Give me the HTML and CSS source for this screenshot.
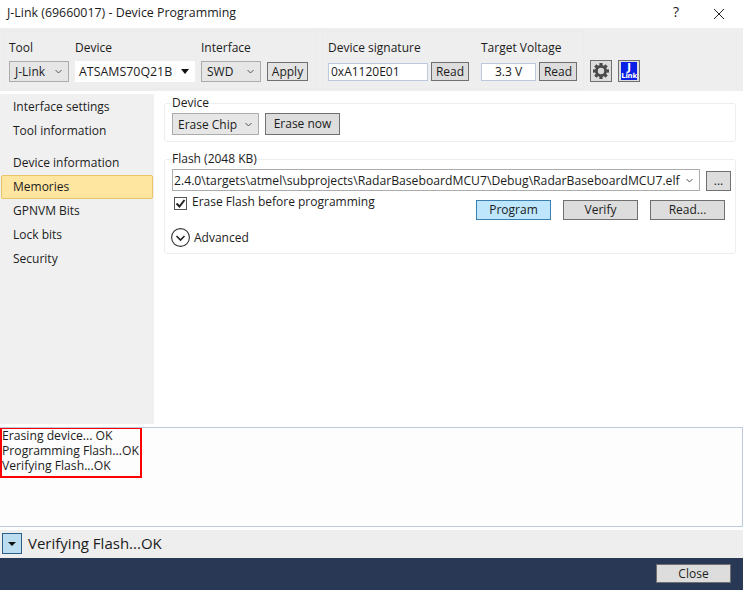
FILE: index.html
```html
<!DOCTYPE html>
<html lang="en">
<head>
<meta charset="utf-8">
<title>J-Link Device Programming</title>
<link rel="stylesheet" href="styles.css">
</head>
<body>
<div class="window">
  <header class="titlebar">
    <span class="title">J-Link (69660017) - Device Programming</span>
    <span class="help">?</span>
    <svg class="close-x" width="12" height="12" viewBox="0 0 12 12"><path d="M1 1L11 11M11 1L1 11" stroke="#222" stroke-width="1" fill="none"/></svg>
  </header>

  <section class="toolbar">
    <div class="panel panel-a">
      <div class="field f-tool">
        <label>Tool</label>
        <div class="combo gray w60"><span>J-Link</span><svg class="chev" width="7" height="5" viewBox="0 0 7 5"><path d="M.5 1L3.5 4L6.5 1" stroke="#555" fill="none"/></svg></div>
      </div>
      <div class="field f-device">
        <label>Device</label>
        <div class="combo white w120"><span class="device-name">ATSAMS70Q21B</span><svg class="arrow" width="8" height="5" viewBox="0 0 8 5"><path d="M0 0H8L4 5Z" fill="#111"/></svg></div>
      </div>
      <div class="field f-iface">
        <label>Interface</label>
        <div class="combo gray w60"><span>SWD</span><svg class="chev" width="7" height="5" viewBox="0 0 7 5"><path d="M.5 1L3.5 4L6.5 1" stroke="#555" fill="none"/></svg></div>
      </div>
      <button class="btn apply">Apply</button>
    </div>
    <div class="panel panel-b">
      <div class="field f-sig">
        <label>Device signature</label>
        <div class="input-row"><div class="input w100">0xA1120E01</div><button class="btn read">Read</button></div>
      </div>
      <div class="field f-volt">
        <label>Target Voltage</label>
        <div class="input-row"><div class="input w55 center">3.3 V</div><button class="btn read">Read</button></div>
      </div>
    </div>
    <button class="icon-btn gear-btn" aria-label="Settings">
      <svg width="18" height="18" viewBox="0 0 18 18"><g fill="#4a4a4a"><circle cx="9" cy="9" r="6"/><rect x="7.4" y="1" width="3.2" height="3.2"/><rect x="7.4" y="13.8" width="3.2" height="3.2"/><rect x="1" y="7.4" width="3.2" height="3.2"/><rect x="13.8" y="7.4" width="3.2" height="3.2"/><g transform="rotate(45 9 9)"><rect x="7.4" y="1" width="3.2" height="3.2"/><rect x="7.4" y="13.8" width="3.2" height="3.2"/><rect x="1" y="7.4" width="3.2" height="3.2"/><rect x="13.8" y="7.4" width="3.2" height="3.2"/></g></g><circle cx="9" cy="9" r="3.2" fill="#d8d8d8"/></svg>
    </button>
    <button class="icon-btn jlink-btn" aria-label="J-Link"><span class="jl-j">J</span><span class="jl-link">Link</span></button>
  </section>

  <main class="main">
    <nav class="sidebar">
      <div class="nav-item">Interface settings</div>
      <div class="nav-item">Tool information</div>
      <div class="nav-gap"></div>
      <div class="nav-item">Device information</div>
      <div class="nav-item active">Memories</div>
      <div class="nav-item">GPNVM Bits</div>
      <div class="nav-item">Lock bits</div>
      <div class="nav-item">Security</div>
    </nav>
    <div class="content">
      <fieldset class="group group-device">
        <legend>Device</legend>
        <div class="row">
          <div class="combo gray erase-combo"><span>Erase Chip</span><svg class="chev" width="7" height="5" viewBox="0 0 7 5"><path d="M.5 1L3.5 4L6.5 1" stroke="#555" fill="none"/></svg></div>
          <button class="btn erase-now">Erase now</button>
        </div>
      </fieldset>
      <fieldset class="group group-flash">
        <legend>Flash (2048 KB)</legend>
        <div class="row path-row">
          <div class="combo white path"><span class="path-text">2.4.0\targets\atmel\subprojects\RadarBaseboardMCU7\Debug\RadarBaseboardMCU7.elf</span><svg class="chev" width="7" height="5" viewBox="0 0 7 5"><path d="M.5 1L3.5 4L6.5 1" stroke="#555" fill="none"/></svg></div>
          <button class="btn browse">...</button>
        </div>
        <div class="row action-row">
          <div class="check-wrap">
            <svg class="check" width="13" height="13" viewBox="0 0 13 13"><rect x=".5" y=".5" width="12" height="12" fill="#fff" stroke="#555"/><path d="M2.5 6.5L5.5 9.5L10.5 3" stroke="#222" stroke-width="2" fill="none"/></svg>
            <span class="check-label">Erase Flash before programming</span>
          </div>
          <div class="actions">
            <button class="btn act primary">Program</button>
            <button class="btn act">Verify</button>
            <button class="btn act">Read...</button>
          </div>
        </div>
        <div class="advanced">
          <svg width="19" height="19" viewBox="0 0 19 19"><circle cx="9.5" cy="9.5" r="8.9" fill="#fff" stroke="#333" stroke-width="1.1"/><path d="M5.5 8L9.5 12L13.5 8" stroke="#222" stroke-width="1.6" fill="none"/></svg>
          <span>Advanced</span>
        </div>
      </fieldset>
    </div>
  </main>

  <section class="log">
    <div class="log-box">
      <div class="log-lines">
        <div>Erasing device... OK</div>
        <div>Programming Flash...OK</div>
        <div>Verifying Flash...OK</div>
      </div>
    </div>
  </section>

  <section class="status">
    <button class="status-btn" aria-label="Toggle log"><svg width="8" height="4" viewBox="0 0 8 4"><path d="M0 0H8L4 4Z" fill="#111"/></svg></button>
    <span class="status-text">Verifying Flash...OK</span>
  </section>

  <footer class="footer">
    <button class="btn close">Close</button>
  </footer>
</div>
</body>
</html>
```

FILE: styles.css
```css
* { box-sizing: border-box; }
html, body { margin: 0; padding: 0; }
body {
  width: 743px;
  height: 590px;
  overflow: hidden;
  background: #fff;
  font-family: "Open Sans", "Noto Sans", sans-serif;
  font-size: 12px;
  color: #1c1c1c;
}
.window { display: flex; flex-direction: column; height: 590px; }

.titlebar { height: 28px; display: flex; align-items: center; padding: 0 0 3px 7px; }
.title { flex: 1; font-size: 12.4px; }
.help { width: 12px; margin-right: 28px; font-size: 14px; line-height: 14px; margin-top: -1px; }
.close-x { margin-right: 18px; margin-top: 2px; }

.toolbar {
  height: 63px;
  background: #eeeeee;
  display: flex;
  align-items: flex-start;
  padding: 3px 0 0 3px;
}
.panel { height: 58px; border: 1px solid #ebebeb; display: flex; padding: 9px 0 0 5px; }
.panel-a { width: 314px; }
.panel-b { width: 262px; margin-left: 5px; }
.field { display: flex; flex-direction: column; }
.field label { height: 20px; line-height: 14px; }
.f-tool { width: 66px; }
.f-device { width: 126px; }
.f-iface { width: 66px; }
.f-sig { width: 153px; }

.combo {
  display: flex;
  align-items: center;
  justify-content: space-between;
  height: 21px;
  padding: 0 6px 0 5px;
  overflow: hidden;
  white-space: nowrap;
}
.combo.gray { background: #e6e6e6; border: 1px solid #acacac; }
.combo.white { background: #fff; }
.w60 { width: 60px; }
.w120 { width: 120px; padding-left: 4px; }
.device-name { font-size: 12.4px; }
.btn {
  font: inherit;
  color: inherit;
  padding: 0;
  background: #dddddd;
  border: 1px solid #707070;
  border-radius: 0;
  line-height: 1;
}
.apply { width: 41px; height: 19px; margin-top: 21px; background: #e3e3e3; }
.input-row { display: flex; align-items: center; height: 21px; }
.input { height: 18px; background: #fff; border: 1px solid #bcc9dc; line-height: 16px; padding-left: 2px; }
.w100 { width: 100px; }
.w55 { width: 55px; }
.center { text-align: center; padding-left: 0; }
.read { width: 38px; height: 19px; margin-left: 3px; }

.icon-btn { width: 22px; height: 22px; padding: 0; background: #dddddd; border: 1px solid #707070; display: flex; align-items: center; justify-content: center; margin-top: 29px; }
.gear-btn { margin-left: 6px; }
.jlink-btn { margin-left: 6px; flex-direction: column; color: #fff; font-family: "DejaVu Sans", sans-serif; font-weight: bold; background: linear-gradient(#0a1ee6, #0a1ee6) center / 16px 18px no-repeat #dddddd; }
.jl-j { font-size: 10px; line-height: 10px; }
.jl-link { font-size: 7px; line-height: 7px; letter-spacing: -0.2px; }

.main { height: 336px; display: flex; padding-top: 3px; }
.sidebar { width: 154px; height: 330px; background: #f0f0f0; padding: 1px 0 0 1px; }
.nav-item { height: 24px; line-height: 24px; padding-left: 12px; }
.nav-gap { height: 8px; }
.nav-item.active { background: #fee6a1; border: 1px solid #ecc468; border-radius: 2px; width: 152px; line-height: 22px; padding-left: 11px; }
.content { flex: 1; padding: 2px 7px 0 10px; }

.group { margin: 0; border: 1px solid #eeeeee; border-radius: 3px; padding: 0 0 0 7px; min-width: 0; }
.group legend { padding: 0; margin-left: 0; line-height: 14px; }
.group-device { height: 46px; }
.group-flash { height: 102px; margin-top: 10px; }
.row { display: flex; }
.erase-combo { width: 87px; height: 22px; margin-top: 3px; }
.erase-now { width: 75px; height: 22px; margin: 3px 0 0 6px; }
.path-row { margin-top: 3px; }
.path { width: 528px; border: 1px solid #acacac; height: 22px; padding: 0 6px 0 1px; }
.path-text { flex: 1; overflow: visible; font-size: 12.2px; }
.browse { width: 25px; height: 20px; margin: 2px 0 0 6px; }
.action-row { justify-content: space-between; height: 37px; padding-right: 10px; }
.check-wrap { display: flex; align-items: flex-start; gap: 5px; padding: 6px 0 0 2px; line-height: 14px; }
.check { flex: none; }
.check-label { margin-top: -2px; }
.actions { display: flex; gap: 12px; padding-top: 9px; }
.act { width: 75px; height: 20px; }
.primary { background: #bee6fd; border-color: #3c7fb1; }
.advanced { display: flex; align-items: center; gap: 4px; margin-left: -1px; }

.log { height: 100px; border-top: 1px solid #bcc9dc; border-bottom: 1px solid #bcc9dc; border-right: 1px solid #bcc9dc; background: #fdfdfd; }
.log-box { width: 142px; height: 50px; border: 2px solid #f00; border-top-width: 1px; padding: 0; white-space: nowrap; }
.log-lines { margin-top: -1px; line-height: 15px; font-size: 12.2px; }

.status { height: 28px; margin-top: 3px; background: #eeeeee; display: flex; align-items: center; padding: 0 0 2px 2px; gap: 6px; }
.status-btn { width: 20px; height: 21px; padding: 0; background: #bcdcf0; border: 1px solid #2a5f8a; display: flex; align-items: center; justify-content: center; margin-top: 1px; }
.status-text { font-size: 15px; }

.footer { flex: 1; background: #283855; display: flex; justify-content: flex-end; align-items: flex-start; padding: 6px 12px 0 0; }
.close { width: 75px; height: 19px; background: #dddddd; }
```
